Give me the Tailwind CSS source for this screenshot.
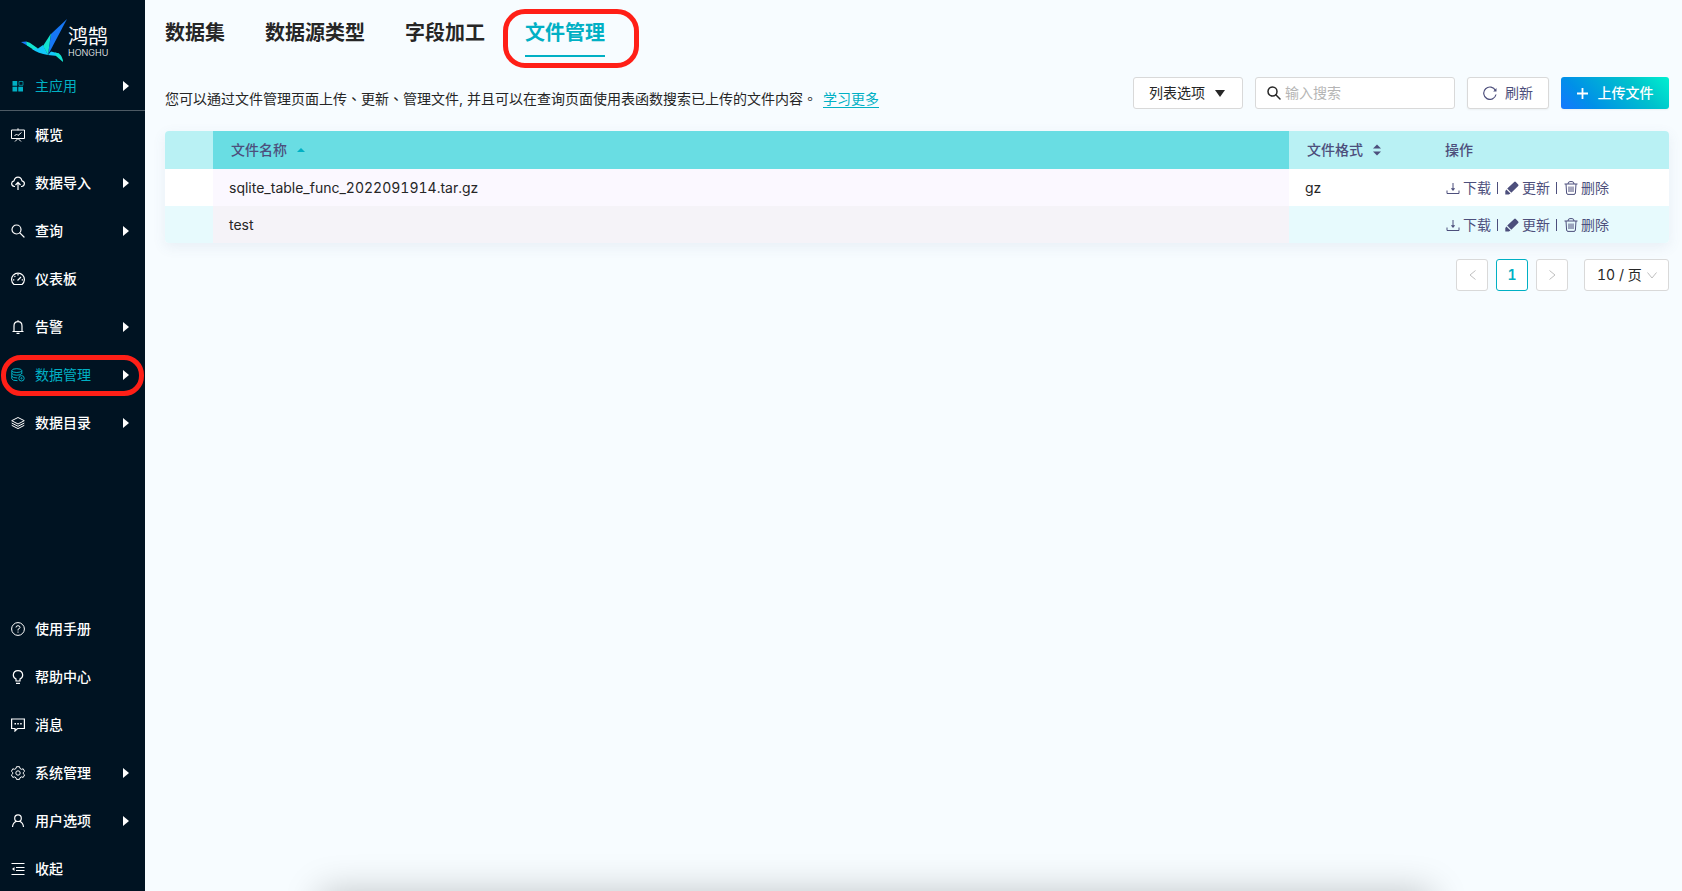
<!DOCTYPE html>
<html lang="zh">
<head>
<meta charset="utf-8">
<meta name="viewport" content="width=device-width, initial-scale=1">
<title>文件管理</title>
<script src="https://cdn.jsdelivr.net/npm/@tailwindcss/browser@4"></script>
</head>
<body class="flex h-screen overflow-hidden bg-[#f7fcff] font-['Inter','Noto_Sans_CJK_TC',sans-serif] text-sm text-[#262626]">
<svg class="hidden" aria-hidden="true">
  <defs>
    <symbol id="caret" viewBox="0 0 6 10"><path d="M0 0L6 5L0 10Z" fill="currentColor"/></symbol>
    <symbol id="search" viewBox="0 0 14 14"><g fill="none" stroke="currentColor" stroke-linecap="round"><circle cx="5.5" cy="5.5" r="4.500"/><path d="M8.800 8.800L13 13"/></g></symbol>
    <symbol id="download" viewBox="0 0 14 14"><path d="M1 9.500v3h12v-3M7 2v6" fill="none" stroke="currentColor"/><path d="M4.800 7.300h4.400L7 10z" fill="currentColor"/></symbol>
    <symbol id="pencil" viewBox="0 0 14 14"><path d="M9.200 1q.8-.8 1.600 0L13.200 3.400q.7.800 0 1.600L6.300 11.800L2.200 7.600ZM1.400 8.400L5.500 12.500L3.800 13.400H.3V10Z" fill="currentColor"/></symbol>
    <symbol id="trash" viewBox="0 0 14 14"><path d="M.5 3h13M4 3Q4 .6 6 .6h2Q10 .6 10 3M2 3l.6 9q.1 1.400 1.400 1.400h6q1.300 0 1.400-1.400L12 3M5 5.500v5.500M7 5.500v5.500M9 5.500v5.500" fill="none" stroke="currentColor"/></symbol>
  </defs>
</svg>

<aside class="flex h-screen w-[145px] shrink-0 flex-col overflow-hidden bg-[#001322] font-medium text-white">
  <a href="#" aria-label="鸿鹄 HONGHU" class="flex h-[62px] shrink-0 items-start pt-[18px] pl-[21px]">
    <svg class="h-[44px] w-[47px]" viewBox="0 0 47 44">
      <path d="M46 1L30 16L27 37Z" fill="#1677f5"/>
      <path d="M30 15.500L22 28L27 37Z" fill="#12e3cf"/>
      <path d="M0 24L5 23.500L7 28Z" fill="#1677f5"/>
      <path d="M5 23.500Q9 24 12 27L17 30.500L13 32L6 27.500Z" fill="#12e3cf"/>
      <path d="M11 31L17 30.500L22 27L27 37Q17 35.500 11 31Z" fill="#12c9fb"/>
      <path d="M27 37L30 33.500L38 35.500L36 38Z" fill="#12c9fb"/>
      <path d="M34 34.500L38 35.500Q42 39 42 44L35 38Z" fill="#12e3cf"/>
    </svg>
    <span class="flex flex-col pt-[7px] font-normal"><span class="text-[20px] leading-6">鸿鹄</span><span class="text-[9px] leading-[8px] font-light">HONGHU</span></span>
  </a>
  <nav class="flex min-h-0 grow flex-col">
    <a href="#" class="flex h-[49px] shrink-0 items-center border-b border-[#4d5a64] pr-4 pl-[11px] font-normal text-[#00b0c4]">
      <svg class="mr-[10px] size-[14px]" viewBox="0 0 14 14"><path d="M1.500 2h4.700v4.700H1.500zM1.500 7.800h4.700v4.700H1.500zM7.300 7.800h4.700v4.700H7.300z" fill="currentColor"/><path d="M8 2.500h4v3.800H8z" fill="none" stroke="currentColor" opacity=".7"/></svg>
      <span class="grow">主应用</span><svg class="h-[10px] w-[6px] text-white"><use href="#caret"/></svg>
    </a>
    <a href="#" class="flex h-12 shrink-0 items-center pr-4 pl-[11px]">
      <svg class="mr-[10px] size-[14px]" viewBox="0 0 14 14" fill="none" stroke="currentColor"><path d="M.5 2h13v8.500H.5zM7 .3v2M4 13.500l3-3l3 3M3.500 8l2-2l1.500 1.500L10.500 4.500"/></svg>
      <span class="grow">概览</span>
    </a>
    <a href="#" class="flex h-12 shrink-0 items-center pr-4 pl-[11px]">
      <svg class="mr-[10px] size-[14px]" viewBox="0 0 14 14" fill="none" stroke="currentColor"><path d="M4 10.500H3.400Q.6 10 .6 7.500Q.8 5.300 3 4.800Q4 1.200 7 1.200T11 4.800Q13.400 5.400 13.400 7.500Q13.300 10.300 10.500 10.500H10M7 14V6.500M4.500 9L7 6.300L9.500 9" stroke-width="1.200"/></svg>
      <span class="grow">数据导入</span><svg class="h-[10px] w-[6px]"><use href="#caret"/></svg>
    </a>
    <a href="#" class="flex h-12 shrink-0 items-center pr-4 pl-[11px]">
      <svg class="mr-[10px] size-[14px]"><use href="#search" stroke-width="1.200"/></svg>
      <span class="grow">查询</span><svg class="h-[10px] w-[6px]"><use href="#caret"/></svg>
    </a>
    <a href="#" class="flex h-12 shrink-0 items-center pr-4 pl-[11px]">
      <svg class="mr-[10px] size-[14px]" viewBox="0 0 14 14" fill="none" stroke="currentColor" stroke-width="1.200"><path d="M3 12.500A6.400 6.400 0 1 1 11 12.500Z"/><path d="M6.500 8.500L10 5M7 2v1.500M3.500 4l.8.800M2 7.800h1.300M10.700 7.800H12"/></svg>
      <span class="grow">仪表板</span>
    </a>
    <a href="#" class="flex h-12 shrink-0 items-center pr-4 pl-[11px]">
      <svg class="mr-[10px] size-[14px]" viewBox="0 0 14 14" fill="none" stroke="currentColor" stroke-width="1.200"><path d="M1.500 11.500h11M3 11.500V6Q3 1.700 7 1.700T11 6v5.500M7 .3v1.400M5.500 13.300h3"/></svg>
      <span class="grow">告警</span><svg class="h-[10px] w-[6px]"><use href="#caret"/></svg>
    </a>
    <div class="relative shrink-0">
      <a href="#" aria-current="page" class="flex h-12 items-center pr-4 pl-[11px] font-normal text-[#00b0c4]">
        <svg class="mr-[10px] size-[14px]" viewBox="0 0 14 14" fill="none" stroke="currentColor"><ellipse cx="5.800" cy="2.600" rx="5" ry="1.900"/><path d="M.8 2.600v8.200q.5 1.900 5.700 1.900M10.800 2.600V6M.8 5.400q1 1.800 5 1.800t5-1.800M.8 8.200q1 1.800 5.500 1.800"/><circle cx="10.500" cy="10.300" r="2.700"/><circle cx="10.500" cy="10.300" r=".6"/></svg>
        <span class="grow">数据管理</span><svg class="h-[10px] w-[6px] text-white"><use href="#caret"/></svg>
      </a>
      <div class="pointer-events-none absolute inset-x-[1px] top-1 bottom-[3px] rounded-[20px] border-[5px] border-[#ff1f17]"></div>
    </div>
    <a href="#" class="flex h-12 shrink-0 items-center pr-4 pl-[11px]">
      <svg class="mr-[10px] size-[14px]" viewBox="0 0 14 14" fill="none" stroke="currentColor"><path d="M7 1.500L13.300 4.700L7 8L.7 4.700ZM.7 7L7 10.300L13.300 7M.7 9.300L7 12.600L13.300 9.300"/></svg>
      <span class="grow">数据目录</span><svg class="h-[10px] w-[6px]"><use href="#caret"/></svg>
    </a>
    <div class="mt-auto -mb-[2px] flex flex-col">
      <a href="#" class="flex h-12 items-center pr-4 pl-[11px]">
        <svg class="mr-[10px] size-[14px]" viewBox="0 0 14 14" fill="none" stroke="currentColor"><circle cx="7" cy="7" r="6.400"/><path d="M5 5.500Q5 3.700 7 3.700T9 5.500Q9 6.500 7 7.300V8.500M7 9.500v1.200"/></svg>
        <span class="grow">使用手册</span>
      </a>
      <a href="#" class="flex h-12 items-center pr-4 pl-[11px]">
        <svg class="mr-[10px] size-[14px]" viewBox="0 0 14 14" fill="none" stroke="currentColor" stroke-width="1.200"><path d="M5 11V9Q2.300 7.700 2.300 5Q2.600.6 7 .6T11.700 5Q11.700 7.700 9 9v2ZM5 13.400h4"/></svg>
        <span class="grow">帮助中心</span>
      </a>
      <a href="#" class="flex h-12 items-center pr-4 pl-[11px]">
        <svg class="mr-[10px] size-[14px]" viewBox="0 0 14 14" fill="none" stroke="currentColor"><path d="M.6 1h12.800v9.500H6.500L4 13V10.500H.6Z" stroke-width="1.200"/><path d="M3.500 5.800H5M6.300 5.800h1.500M9.200 5.800h1.500" stroke-width="1.400"/></svg>
        <span class="grow">消息</span>
      </a>
      <a href="#" class="flex h-12 items-center pr-4 pl-[11px]">
        <svg class="mr-[10px] size-[14px]" viewBox="0 0 14 14" fill="none" stroke="currentColor" stroke-linejoin="round"><path d="M5.500.7h3L9 2.500l1.500.8l1.700-.5l1.400 2.500L12.300 6.500v1.300l1.300 1.100l-1.400 2.500l-1.700-.5l-1.500.8L8.500 13.400h-3L5 11.700l-1.500-.8l-1.700.5L.4 8.900L1.700 7.800V6.500L.4 5.300L1.800 2.800l1.700.5L5 2.500Z"/><circle cx="7" cy="7" r="2.200"/></svg>
        <span class="grow">系统管理</span><svg class="h-[10px] w-[6px]"><use href="#caret"/></svg>
      </a>
      <a href="#" class="flex h-12 items-center pr-4 pl-[11px]">
        <svg class="mr-[10px] size-[14px]" viewBox="0 0 14 14" fill="none" stroke="currentColor" stroke-width="1.200"><circle cx="7" cy="4.200" r="3.300"/><path d="M1.500 13Q1.800 9 5.300 7.300M12.500 13Q12.200 9 8.700 7.300"/></svg>
        <span class="grow">用户选项</span><svg class="h-[10px] w-[6px]"><use href="#caret"/></svg>
      </a>
      <button type="button" class="flex h-12 items-center pr-4 pl-[11px] text-left">
        <svg class="mr-[10px] size-[14px]" viewBox="0 0 14 14" fill="none" stroke="currentColor" stroke-width="1.200"><path d="M.5 1.500h13M5 5.500h8.500M5 8.500h8.500M.5 12.500h13"/><path d="M3.500 5v4L1 7Z" fill="currentColor" stroke="none"/></svg>
        <span class="grow">收起</span>
      </button>
    </div>
  </nav>
</aside>

<main class="flex min-w-0 grow flex-col pr-[13px] pl-5">
  <nav class="flex gap-10 pt-[13px] text-xl leading-10 font-bold">
    <a href="#">数据集</a>
    <a href="#">数据源类型</a>
    <a href="#">字段加工</a>
    <div class="relative">
      <a href="#" aria-current="page" class="block h-11 border-b-2 border-[#00b0c4] text-[#00b0c4]">文件管理</a>
      <div class="pointer-events-none absolute -top-[4px] -right-[34px] -bottom-[11px] -left-[22px] rounded-[22px] border-[5px] border-[#ff1f17]"></div>
    </div>
  </nav>

  <div class="mt-5 flex h-8 items-center gap-3">
    <p lang="zh-Hant" class="mt-3 grow truncate">您可以通过文件管理页面上传、更新、管理文件, 并且可以在查询页面使用表函数搜索已上传的文件内容。<a href="#" class="ml-[6px] border-b border-[#00b0c4] text-[#00b0c4]">学习更多</a></p>
    <button type="button" class="flex h-8 w-[110px] shrink-0 items-center gap-[10px] rounded-[3px] border border-[#d9d9d9] bg-white pl-[15px]">列表选项<svg class="h-[7px] w-[10px]" viewBox="0 0 10 7"><path d="M0 0h10L5 7z" fill="currentColor"/></svg></button>
    <label class="flex h-8 w-[200px] shrink-0 items-center gap-1 rounded-[3px] border border-[#d9d9d9] bg-white px-[11px]">
      <svg class="size-[14px] shrink-0"><use href="#search" stroke-width="1.500"/></svg>
      <input type="text" aria-label="输入搜索" placeholder="输入搜索" class="w-full min-w-0 outline-none placeholder:text-[#b5b5b5]">
    </label>
    <button type="button" class="flex h-8 w-[82px] shrink-0 items-center justify-center gap-2 rounded-[3px] border border-[#d9d9d9] bg-white text-[#4d4f7c] shadow-xs">
      <svg class="size-[14px]" viewBox="0 0 14 14" fill="none" stroke="currentColor"><path d="M12.500 4.500A6.200 6.200 0 1 0 13 8.500" stroke-width="1.200"/><path d="M13.500 2v3.500H10.200Z" fill="currentColor" stroke="none"/></svg>刷新</button>
    <button type="button" class="flex h-8 w-[108px] shrink-0 items-center justify-center gap-[10px] rounded-[3px] bg-linear-[45deg,#1677ff,#0090e8_25%,#00c3cc_70%,#00f0d0] font-medium text-white shadow-xs">
      <svg class="size-[11px]" viewBox="0 0 11 11"><path d="M5.500 0v11M0 5.500h11" stroke="currentColor" stroke-width="1.800"/></svg>上传文件</button>
  </div>

  <div class="mt-[22px] overflow-hidden rounded bg-white shadow-[0_4px_14px_rgba(80,100,140,0.09)]">
    <table class="w-full table-fixed border-collapse text-left tabular-nums">
      <colgroup><col class="w-12"><col><col class="w-[138px]"><col class="w-[242px]"></colgroup>
      <thead class="bg-[#b9f1f4] text-[#4d4f7c]">
        <tr class="h-[38px]">
          <td></td>
          <th scope="col" class="bg-[#69dde3] pl-[18px] font-medium"><button type="button" class="flex items-center gap-[10px]">文件名称<svg class="h-1 w-2 text-[#00b0c4]" viewBox="0 0 8 4"><path d="M0 4L4 0L8 4Z" fill="currentColor"/></svg></button></th>
          <th scope="col" class="pl-[18px] font-medium"><button type="button" class="flex items-center gap-[10px]">文件格式<svg class="h-3 w-2" viewBox="0 0 8 12"><path d="M0 4.500L4 .5L8 4.500ZM0 7.500L4 11.500L8 7.500Z" fill="currentColor"/></svg></button></th>
          <th scope="col" class="pl-[18px] font-medium">操作</th>
        </tr>
      </thead>
      <tbody>
        <tr class="h-[37px]">
          <td></td>
          <td class="bg-[#fbf8ff] pl-4">sqlite_table_func_2022091914.tar.gz</td>
          <td class="pl-4">gz</td>
          <td class="pl-[18px] text-[#4d4f7c]">
            <div class="flex items-center gap-[6px]">
              <button type="button" class="flex items-center gap-[3px] pl-px"><svg class="size-[14px]"><use href="#download"/></svg>下载</button>
              <span class="h-3 w-px bg-[#4d4f7c]"></span>
              <button type="button" class="flex items-center gap-[3px] pl-px"><svg class="size-[14px]"><use href="#pencil"/></svg>更新</button>
              <span class="h-3 w-px bg-[#4d4f7c]"></span>
              <button type="button" class="flex items-center gap-[3px] pl-px"><svg class="size-[14px]"><use href="#trash"/></svg>删除</button>
            </div>
          </td>
        </tr>
        <tr class="h-[37px] bg-[#e7fafd]">
          <td></td>
          <td class="bg-[#f5f3f8] pl-4">test</td>
          <td class="pl-4"></td>
          <td class="pl-[18px] text-[#4d4f7c]">
            <div class="flex items-center gap-[6px]">
              <button type="button" class="flex items-center gap-[3px] pl-px"><svg class="size-[14px]"><use href="#download"/></svg>下载</button>
              <span class="h-3 w-px bg-[#4d4f7c]"></span>
              <button type="button" class="flex items-center gap-[3px] pl-px"><svg class="size-[14px]"><use href="#pencil"/></svg>更新</button>
              <span class="h-3 w-px bg-[#4d4f7c]"></span>
              <button type="button" class="flex items-center gap-[3px] pl-px"><svg class="size-[14px]"><use href="#trash"/></svg>删除</button>
            </div>
          </td>
        </tr>
      </tbody>
    </table>
  </div>

  <div class="mt-4 flex justify-end gap-2 tabular-nums">
    <button type="button" aria-label="上一页" disabled class="grid size-8 place-items-center rounded-[3px] border border-[#d9d9d9] bg-white text-[#bfbfbf]"><svg class="h-[10px] w-[7px]" viewBox="0 0 7 10"><path d="M6.500.5L1 5l5.500 4.500" fill="none" stroke="currentColor"/></svg></button>
    <button type="button" aria-current="page" class="grid size-8 place-items-center rounded-[3px] border border-[#00b0c4] bg-white font-semibold text-[#00b0c4]">1</button>
    <button type="button" aria-label="下一页" disabled class="grid size-8 place-items-center rounded-[3px] border border-[#d9d9d9] bg-white text-[#bfbfbf]"><svg class="h-[10px] w-[7px]" viewBox="0 0 7 10"><path d="M.5.5L6 5L.5 9.500" fill="none" stroke="currentColor"/></svg></button>
    <div class="relative ml-2">
      <select aria-label="每页条数" class="h-8 w-[85px] appearance-none rounded-[3px] border border-[#d9d9d9] bg-white pl-3"><option>10 / 页</option></select>
      <svg class="pointer-events-none absolute top-[13px] right-[12px] h-[7px] w-[10px] text-[#bfbfbf]" viewBox="0 0 10 7"><path d="M.5.5L5 6L9.500.5" fill="none" stroke="currentColor"/></svg>
    </div>
  </div>
</main>
<div class="pointer-events-none fixed top-full right-[250px] left-[320px] h-20 shadow-[0_0_36px_rgba(0,0,0,0.22)]"></div>
</body>
</html>
